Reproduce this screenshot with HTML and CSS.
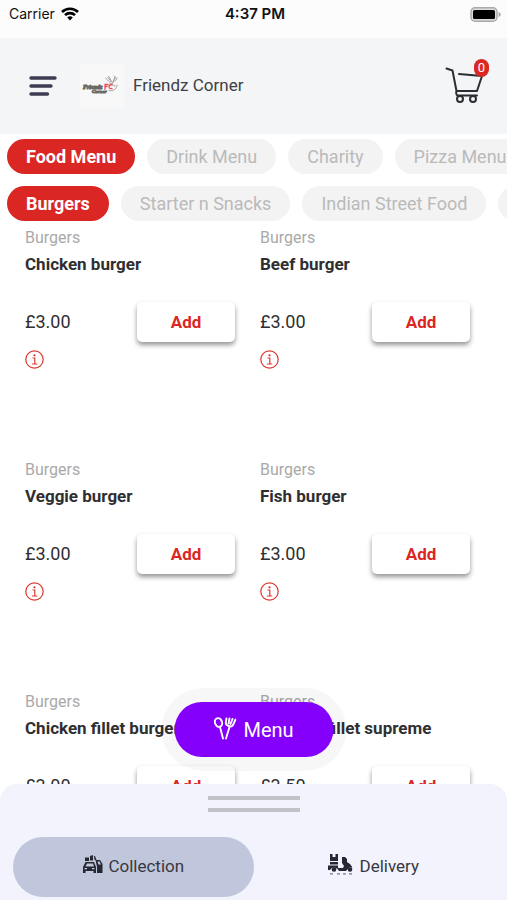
FILE: index.html
```html
<!DOCTYPE html>
<html lang="en">
<head>
<meta charset="utf-8">
<meta name="viewport" content="width=device-width, initial-scale=1">
<title>Friendz Corner</title>
<link rel="stylesheet" href="styles.css">
</head>
<body>
<div class="app">
  <div class="status">
    <span class="carrier">Carrier
      <svg width="18" height="14" viewBox="0 0 18 14" fill="none" stroke="#000" stroke-width="2.6"><path d="M1 5a11.3 11.3 0 0 1 16 0M4 8.2a7 7 0 0 1 10 0"/><path d="M9 13.5 6.2 10.6a4 4 0 0 1 5.6 0z" fill="#000" stroke="none"/></svg>
    </span>
    <span class="time">4:37 PM</span>
    <span class="battery"><svg width="31" height="15" viewBox="0 0 31 15"><rect x="1" y=".8" width="26" height="13.4" rx="4" fill="#ddd" stroke="#aaa" stroke-width="1.5"/><rect x="3" y="3" width="22" height="9" rx="1.5" fill="#000"/><path d="M28.5 5c3 1 3 4 0 5z" fill="#aaa"/></svg></span>
  </div>

  <header class="header">
    <button class="icon-button" aria-label="Open navigation">
      <svg width="28" height="20" viewBox="0 0 28 20" stroke="#3e3b54" stroke-width="3.4" stroke-linecap="round"><path d="M2 2h24M2 10h20M2 18h16.500"/></svg>
    </button>
    <svg class="logo" width="44" height="44" viewBox="0 0 44 44" fill="none" stroke-linecap="round" stroke-linejoin="round">
      <rect width="44" height="44" fill="#f8f8f8"/>
      <g stroke="#999" stroke-width=".9"><path d="m25.500 14 6 6M27.500 13l4 5M29 12.500l2.500 5M32 20l3-7M34 12c2 1 2 3 0 4M33 18c2-1 4-2 4-4"/><path d="M37 21c0 4-4 6.500-8 5.500M30 20l5 2"/></g>
      <g class="script"><text x="3" y="25">Friendz</text><text class="second" x="12" y="29">Corner</text></g>
      <path d="M25 25.500v-5h3m-3 2h2m5-2c-4 0-4 5 0 4" stroke="#f0494d" stroke-width="1.300"/>
    </svg>
    <h1 class="title">Friendz Corner</h1>
    <button class="cart" aria-label="Basket">
      <svg width="38" height="38" viewBox="0 0 38 38" fill="none" stroke="#2b2e33" stroke-width="2" stroke-linecap="round" stroke-linejoin="round"><path d="m1.500 1.500 6 2 4 20.500h20.500l5-15L14 7M11.500 24c-.5 1-.5 4 1 4.500h19.500"/><circle cx="15" cy="32" r="3"/><circle cx="28" cy="32" r="3"/></svg>
      <span class="count">0</span>
    </button>
  </header>

  <nav class="tabs" aria-label="Menus">
    <div class="chips">
      <button class="chip active">Food Menu</button><button class="chip">Drink Menu</button><button class="chip">Charity</button><button class="chip">Pizza Menu</button>
    </div>
    <div class="chips">
      <button class="chip active">Burgers</button><button class="chip">Starter n Snacks</button><button class="chip">Indian Street Food</button><button class="chip">Wraps</button>
    </div>
  </nav>

  <main class="items">
    <article class="item"><p class="category">Burgers</p><h2 class="name">Chicken burger</h2><div class="buy"><span class="price">£3.00</span><button class="add">Add</button></div><button class="info" aria-label="About Chicken burger"><svg width="20" height="20" viewBox="0 0 20 20"><use href="#info"/></svg></button></article>
    <article class="item"><p class="category">Burgers</p><h2 class="name">Beef burger</h2><div class="buy"><span class="price">£3.00</span><button class="add">Add</button></div><button class="info" aria-label="About Beef burger"><svg width="20" height="20" viewBox="0 0 20 20"><use href="#info"/></svg></button></article>
    <article class="item"><p class="category">Burgers</p><h2 class="name">Veggie burger</h2><div class="buy"><span class="price">£3.00</span><button class="add">Add</button></div><button class="info" aria-label="About Veggie burger"><svg width="20" height="20" viewBox="0 0 20 20"><use href="#info"/></svg></button></article>
    <article class="item"><p class="category">Burgers</p><h2 class="name">Fish burger</h2><div class="buy"><span class="price">£3.00</span><button class="add">Add</button></div><button class="info" aria-label="About Fish burger"><svg width="20" height="20" viewBox="0 0 20 20"><use href="#info"/></svg></button></article>
    <article class="item"><p class="category">Burgers</p><h2 class="name">Chicken fillet burger</h2><div class="buy"><span class="price">£3.00</span><button class="add">Add</button></div></article>
    <article class="item"><p class="category">Burgers</p><h2 class="name">Chicken fillet supreme</h2><div class="buy"><span class="price">£3.50</span><button class="add">Add</button></div></article>
  </main>

  <footer class="sheet">
    <div class="floating">
      <button class="menu">
        <svg width="23" height="25" viewBox="0 0 23 25" fill="none" stroke="#fff" stroke-width="1.900" stroke-linecap="round" stroke-linejoin="round"><ellipse cx="5" cy="5.500" rx="3.500" ry="4.500" transform="rotate(-20 5 5.500)"/><path d="m6.500 10 3 11.500M16 10l-3.500 11.500M13 1.500l-.7 4c-.4 3 5.500 5.500 7.200 2.500l2.500-5.500M16 1.500l-1 5M19 2l-2 5"/></svg>
        Menu
      </button>
    </div>
    <div class="handle"></div>
    <div class="modes">
      <button class="mode selected">
        <svg width="21" height="22" viewBox="0 0 21 22" fill="#252733"><path d="M3.500 7h8.500l2 5v6h-2.500v-2h-8v2H1v-6z"/><path d="M5 8.500h6l1 3H3.500z" fill="#c0c7dd"/><path d="M2.500 13.700h2.500M10 13.700h2.500" stroke="#c0c7dd" stroke-width="1.200"/><path d="M13.500 5H18l2.500 4v9H15v-6z"/><path d="M15.500 6.500h2l1.500 3h-2.500z" fill="#c0c7dd"/><path d="M3 2.500h4V6H3zM8 1l3-1v5.500H8zM12 1h1l1.500 4h-2z"/></svg>
        Collection
      </button>
      <button class="mode">
        <svg width="26" height="24" viewBox="0 0 26 24" fill="#252733"><path d="M2 0h2.500v3h3V0H10v7H2zM2 8h8v2.500H2z"/><path d="M0 11.500h10V14h5l1-2-2-3V3h3l2 2v3l3 2 2.500 3.500H21L18 17h-7a5 5 0 0 0-9-1H0z"/><circle cx="6" cy="15.500" r="2.300"/><circle cx="22" cy="15.500" r="2.300"/><path d="M2 19.800h3m4 0h3m3 0h3m3 0h3" stroke="#777985" stroke-width="1.200"/></svg>
        Delivery
      </button>
    </div>
  </footer>
</div>
<svg width="0" height="0" class="symbols" aria-hidden="true"><symbol id="info" viewBox="0 0 20 20"><circle cx="9.500" cy="10.500" r="8.700" fill="none" stroke="#d93831" stroke-width="1.200"/><circle cx="9.500" cy="6.300" r="1.100" fill="#d93831"/><path d="M7.500 9h2.300v6M7 15h5.300" fill="none" stroke="#d93831" stroke-width="1.200"/></symbol></svg>
</body>
</html>
```

FILE: styles.css
```css
* { box-sizing: border-box; }
body {
  margin: 0;
  background: #fff;
  color: #2f2f31;
  font-family: Roboto, "Liberation Sans", sans-serif;
}
button {
  margin: 0;
  padding: 0;
  border: 0;
  background: none;
  color: inherit;
  font: inherit;
  cursor: pointer;
}
svg { display: block; flex: none; }
h1, h2, p { margin: 0; }
.symbols { position: absolute; }

.app {
  display: flex;
  flex-direction: column;
  height: 100vh;
  overflow: hidden;
}

.status {
  display: grid;
  grid-template-columns: 1fr auto 1fr;
  align-items: center;
  flex: none;
  padding: 4px 6px 14px 9px;
  background: #fcfcfc;
  color: #111;
  font: 14px/20px Inter, sans-serif;
}
.carrier { display: flex; align-items: center; gap: 6px; }
.time { font-size: 15px; font-weight: 600; }
.battery { justify-self: end; }

.header {
  display: flex;
  align-items: center;
  flex: none;
  padding: 26px 24px 26px 29px;
  background: #f3f5f7;
}
.logo { margin-left: 23px; }
.script {
  fill: #45433f;
  stroke: #6b6862;
  stroke-width: 1px;
  font: italic 700 6px "Liberation Serif", serif;
}
.second { font-size: 5px; }
.title {
  flex: 1;
  margin-left: 9px;
  padding-bottom: 2px;
  color: #404044;
  font-size: 17px;
  font-weight: 400;
  line-height: 20px;
}
.cart { position: relative; }
.count {
  position: absolute;
  top: -8px;
  right: -6px;
  padding: 0 4px;
  border-radius: 9px;
  background: #da2723;
  color: #fff;
  font-size: 13px;
  line-height: 18px;
}

.tabs {
  display: flex;
  flex-direction: column;
  flex: none;
  gap: 12px;
  padding: 5px 0 8px 7px;
}
.chips { display: flex; gap: 12px; overflow: hidden; }
.chip {
  flex: none;
  padding: 0 19px;
  border-radius: 18px;
  background: #f3f3f3;
  color: #bababa;
  font-size: 18px;
  line-height: 35px;
}
.chip.active { background: #da2723; color: #fff; font-weight: 700; }

.items {
  display: grid;
  grid-template-columns: 1fr 1fr;
  grid-auto-rows: 232px;
  column-gap: 25px;
  flex: 1;
  min-height: 0;
  padding: 0 37px 0 25px;
  overflow: hidden;
}
.category { color: #a9a9a9; font-size: 16px; line-height: 18px; }
.name {
  margin-top: 7px;
  font-size: 17px;
  font-weight: 700;
  line-height: 20px;
  white-space: nowrap;
}
.buy {
  display: flex;
  align-items: center;
  justify-content: space-between;
  margin-top: 28px;
}
.price { font-size: 18px; line-height: 20px; }
.add {
  width: 98px;
  border-radius: 5px;
  background: #fff;
  box-shadow: 0 3px 5px rgba(0, 0, 0, .42);
  color: #da2723;
  font-size: 17px;
  font-weight: 700;
  line-height: 40px;
}
.info { margin-top: 7px; }

.sheet {
  position: relative;
  flex: none;
  padding: 12px 13px 3px;
  border-radius: 17px 17px 0 0;
  background: #f2f3fc;
}
.floating {
  position: absolute;
  bottom: 100%;
  left: 50%;
  margin-bottom: 13px;
  padding: 14px 13px;
  border-radius: 42px;
  background: rgba(0, 0, 0, .03);
  transform: translateX(-50%);
}
.menu {
  display: flex;
  align-items: center;
  justify-content: center;
  gap: 7px;
  width: 159px;
  height: 55px;
  border-radius: 28px;
  background: #8500fb;
  color: #fff;
  font-size: 20px;
}
.handle {
  width: 92px;
  height: 16px;
  margin: 0 auto;
  border: solid #c2c3c9;
  border-width: 4px 0;
}
.modes { display: flex; margin-top: 25px; }
.mode {
  display: flex;
  align-items: center;
  justify-content: center;
  flex: 1;
  gap: 5px;
  height: 60px;
  padding-bottom: 2px;
  border-radius: 30px;
  color: #38383e;
  font-size: 17px;
}
.mode.selected { background: #c0c7dd; }
```
